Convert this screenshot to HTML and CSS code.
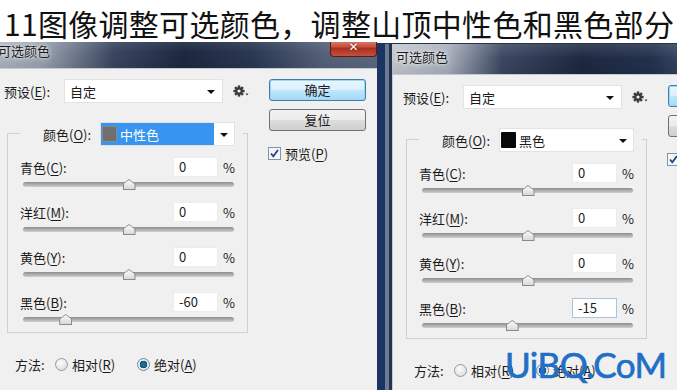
FILE: index.html
```html
<!DOCTYPE html>
<html>
<head>
  <meta charset="utf-8">
  <title>可选颜色</title>
  <link rel="stylesheet" href="styles.css">
</head>
<body>
  <h1 class="headline">11图像调整可选颜色，调整山顶中性色和黑色部分</h1>

  <div class="stage">
      <div class="win win-a">
          <div class="titlebar">
              <span class="title">可选颜色</span>
              <span class="close">✕</span>
          </div>
          <div class="client">
              <div class="main">
                  <div class="preset">
                      <span class="lbl">预设(<u>E</u>):</span>
                      <span class="select preset-select">自定<i class="arrow"></i></span>
                      <svg class="gear" width="16" height="12" viewBox="0 0 16 12">
                          <g fill="#3a3a3a" transform="translate(6 6)">
                              <circle r="3.7"/>
                              <rect x="-1.2" y="-5.6" width="2.4" height="11.2"/>
                              <rect x="-1.2" y="-5.6" width="2.4" height="11.2" transform="rotate(45)"/>
                              <rect x="-1.2" y="-5.6" width="2.4" height="11.2" transform="rotate(90)"/>
                              <rect x="-1.2" y="-5.6" width="2.4" height="11.2" transform="rotate(135)"/>
                          </g>
                          <circle cx="6" cy="6" r="1.6" fill="#f0f0f0"/>
                          <path d="M12.5 8.5h3l-1.5 2z" fill="#3a3a3a"/>
                      </svg>
                  </div>

                  <div class="group">
                      <div class="legend">
                          <span class="lbl">颜色(<u>O</u>):</span>
                          <span class="select color-select picked">
                              <b class="swatch neutral"></b><span class="cname">中性色</span>
                              <span class="drop"><i class="arrow"></i></span>
                          </span>
                      </div>
                      <div class="rows">
                          <div class="row">
                              <div class="field"><span class="lbl">青色(<u>C</u>):</span><span class="num">0</span><span class="pct">%</span></div>
                              <div class="slider"><span class="thumb" style="left: 50%"></span></div>
                          </div>
                          <div class="row">
                              <div class="field"><span class="lbl">洋红(<u>M</u>):</span><span class="num">0</span><span class="pct">%</span></div>
                              <div class="slider"><span class="thumb" style="left: 50%"></span></div>
                          </div>
                          <div class="row">
                              <div class="field"><span class="lbl">黄色(<u>Y</u>):</span><span class="num">0</span><span class="pct">%</span></div>
                              <div class="slider"><span class="thumb" style="left: 50%"></span></div>
                          </div>
                          <div class="row">
                              <div class="field"><span class="lbl">黑色(<u>B</u>):</span><span class="num">-60</span><span class="pct">%</span></div>
                              <div class="slider"><span class="thumb" style="left: 20%"></span></div>
                          </div>
                      </div>
                  </div>

                  <div class="method">
                      <span class="lbl">方法:</span>
                      <span class="opt"><i class="radio"></i><span>相对(<u>R</u>)</span></span>
                      <span class="opt"><i class="radio on"></i><span>绝对(<u>A</u>)</span></span>
                  </div>
              </div>

              <div class="side">
                  <span class="btn default">确定</span>
                  <span class="btn">复位</span>
                  <span class="check">
                      <svg class="box" width="13" height="13" viewBox="0 0 13 13">
                          <rect x="0.5" y="0.5" width="12" height="12" fill="#f4f6f8" stroke="#8593a2"/>
                          <path d="M3 6.5l2.3 2.8L10 3" fill="none" stroke="#23438a" stroke-width="1.8"/>
                      </svg>
                      <span>预览(<u>P</u>)</span>
                  </span>
              </div>
          </div>
      </div>

      <div class="win win-b">
          <div class="titlebar">
              <span class="title">可选颜色</span>
          </div>
          <div class="client">
              <div class="main">
                  <div class="preset">
                      <span class="lbl">预设(<u>E</u>):</span>
                      <span class="select preset-select">自定<i class="arrow"></i></span>
                      <svg class="gear" width="16" height="12" viewBox="0 0 16 12">
                          <g fill="#3a3a3a" transform="translate(6 6)">
                              <circle r="3.7"/>
                              <rect x="-1.2" y="-5.6" width="2.4" height="11.2"/>
                              <rect x="-1.2" y="-5.6" width="2.4" height="11.2" transform="rotate(45)"/>
                              <rect x="-1.2" y="-5.6" width="2.4" height="11.2" transform="rotate(90)"/>
                              <rect x="-1.2" y="-5.6" width="2.4" height="11.2" transform="rotate(135)"/>
                          </g>
                          <circle cx="6" cy="6" r="1.6" fill="#f0f0f0"/>
                          <path d="M12.5 8.5h3l-1.5 2z" fill="#3a3a3a"/>
                      </svg>
                  </div>

                  <div class="group">
                      <div class="legend">
                          <span class="lbl">颜色(<u>O</u>):</span>
                          <span class="select color-select">
                              <b class="swatch black"></b><span class="cname">黑色</span>
                              <span class="drop"><i class="arrow"></i></span>
                          </span>
                      </div>
                      <div class="rows">
                          <div class="row">
                              <div class="field"><span class="lbl">青色(<u>C</u>):</span><span class="num">0</span><span class="pct">%</span></div>
                              <div class="slider"><span class="thumb" style="left: 50%"></span></div>
                          </div>
                          <div class="row">
                              <div class="field"><span class="lbl">洋红(<u>M</u>):</span><span class="num">0</span><span class="pct">%</span></div>
                              <div class="slider"><span class="thumb" style="left: 50%"></span></div>
                          </div>
                          <div class="row">
                              <div class="field"><span class="lbl">黄色(<u>Y</u>):</span><span class="num">0</span><span class="pct">%</span></div>
                              <div class="slider"><span class="thumb" style="left: 50%"></span></div>
                          </div>
                          <div class="row">
                              <div class="field"><span class="lbl">黑色(<u>B</u>):</span><span class="num focus">-15</span><span class="pct">%</span></div>
                              <div class="slider"><span class="thumb" style="left: 42.5%"></span></div>
                          </div>
                      </div>
                  </div>

                  <div class="method">
                      <span class="lbl">方法:</span>
                      <span class="opt"><i class="radio"></i><span>相对(<u>R</u>)</span></span>
                      <span class="opt"><i class="radio on"></i><span>绝对(<u>A</u>)</span></span>
                  </div>
              </div>

              <div class="side">
                  <span class="btn default">确定</span>
                  <span class="btn">复位</span>
                  <span class="check">
                      <svg class="box" width="13" height="13" viewBox="0 0 13 13">
                          <rect x="0.5" y="0.5" width="12" height="12" fill="#f4f6f8" stroke="#8593a2"/>
                          <path d="M3 6.5l2.3 2.8L10 3" fill="none" stroke="#23438a" stroke-width="1.8"/>
                      </svg>
                      <span>预览(<u>P</u>)</span>
                  </span>
              </div>
          </div>
      </div>

      <div class="watermark">UiBQ.CoM</div>
  </div>
</body>
</html>
```

FILE: styles.css
```css
* {
box-sizing: border-box;
}
html, body {
margin: 0;
}
body {
width: 677px;
height: 390px;
overflow: hidden;
background: #fff;
color: #1b1b1b;
font-family: "Noto Sans CJK SC", sans-serif;
font-size: 13px;
}
u {
text-decoration-thickness: 1px;
text-underline-offset: 2px;
}

/* header line */
.headline {
margin: 0;
height: 42px;
padding: 4px 0 0 4px;
font: 400 30px/38px "Noto Sans CJK SC", sans-serif;
letter-spacing: 0.3px;
color: #111;
white-space: nowrap;
}

.stage {
position: relative;
display: flex;
height: 348px;
overflow: hidden;
}

/* windows */
.win {
flex: none;
display: flex;
flex-direction: column;
}
.win-a {
width: 383px;
margin: -5px 0 0 -6px;
}
.win-b {
width: 398px;
margin-top: 1px;
padding-left: 15px;
background: linear-gradient(to right, #1b3560 0 8px, #6c7b91 8px 12px, #24324d 12px 15px);
border-top: 1px solid #2a3447;
}
.titlebar {
flex: none;
height: 31px;
display: flex;
align-items: flex-start;
padding: 6px 0 0 4px;
}
.win-a .titlebar {
background:
  linear-gradient(rgba(255,255,255,.12), rgba(255,255,255,0) 50%, rgba(0,0,0,.08)),
  linear-gradient(to right, #b2b8c3 0, #9aa2b0 50px, #3a4660 120px, #1d2841 190px, #2c3953 260px, #55627a 330px, #5d6a82 383px);
}
.win-b .titlebar {
height: 30px;
padding-top: 5px;
background:
  linear-gradient(rgba(255,255,255,.12), rgba(255,255,255,0) 50%, rgba(0,0,0,.08)),
  linear-gradient(to right, #c3c8d0 0, #aab1bd 55px, #3b4761 110px, #1d2841 190px, #23314d 260px, #3a4b69 300px);
}
.title {
font-size: 13px;
line-height: 16px;
color: #1a1a1a;
text-shadow: 0 0 5px rgba(255,255,255,.9), 0 0 2px rgba(255,255,255,.8);
}
.close {
margin-left: auto;
margin-top: -4px;
width: 47px;
height: 18px;
border: 1px solid #5a1c14;
border-top: 0;
border-radius: 0 0 4px 4px;
background: linear-gradient(#e08f7f, #c7503d 45%, #a8301f 55%, #c4513b);
color: #fff;
font: bold 12px/16px "DejaVu Sans", sans-serif;
text-align: center;
text-shadow: 0 0 2px #5a1c14;
}

.client {
flex: 1;
display: flex;
background: #f0f0f0;
border-top: 1px solid #c3cad4;
}
.win-b .client {
border-left: 1px solid #c3cad4;
}

.main {
flex: none;
width: 275px;
padding: 10px 0 0 10px;
}
.lbl {
flex: none;
white-space: nowrap;
}

/* preset */
.preset {
display: flex;
align-items: center;
height: 24px;
}
.preset .lbl {
width: 60px;
}
.select {
position: relative;
display: flex;
align-items: center;
height: 24px;
background: #fff;
border: 1px solid #e3e3e3;
padding-left: 5px;
}
.preset-select {
width: 159px;
}
.arrow {
position: absolute;
top: 10px;
right: 7px;
width: 0;
height: 0;
border-top: 4px solid #111;
border-left: 4px solid transparent;
border-right: 4px solid transparent;
}
.gear {
margin-left: 10px;
}

/* group box */
.group {
margin: 30px 0 0 3px;
width: 241px;
border: 1px solid #cdd1d6;
padding-bottom: 6px;
}
.legend {
display: flex;
align-items: center;
margin: -12px 0 0 12px;
width: 223px;
padding: 0 8px 0 23px;
background: #f0f0f0;
}
.legend .lbl {
width: 57px;
}
.color-select {
width: 135px;
padding-left: 1px;
}
.color-select.picked {
background: linear-gradient(to right, #3794ef 0 113px, #fff 113px);
color: #fff;
}
.swatch {
width: 15px;
height: 16px;
margin-right: 3px;
border-radius: 1px;
}
.swatch.neutral {
background: #6f6f6f;
border: 1px solid #8a8a8a;
}
.swatch.black {
background: #080808;
}
.drop .arrow {
right: 6px;
}

/* sliders */
.rows {
display: flex;
flex-direction: column;
gap: 11px;
margin-top: 11px;
padding-left: 12px;
}
.row {
height: 34px;
}
.field {
display: flex;
align-items: center;
height: 20px;
}
.field .lbl {
width: 153px;
}
.num {
width: 45px;
height: 20px;
line-height: 18px;
padding-left: 5px;
background: #fff;
border: 1px solid #ececec;
}
.num.focus {
border-color: #a9c4de;
}
.pct {
margin-left: 5px;
}
.slider {
position: relative;
margin: 5px 0 0 3px;
width: 211px;
height: 5px;
border-radius: 3px;
background: linear-gradient(#8d8d8d, #b4b4b4 60%, #d0d0d0);
}
.thumb {
position: absolute;
top: -3px;
width: 13px;
height: 11px;
margin-left: -6px;
background: #8a8a8a;
clip-path: polygon(50% 0, 100% 45%, 100% 100%, 0 100%, 0 45%);
}
.thumb::after {
content: '';
position: absolute;
inset: 1px;
background: linear-gradient(#fafafa, #d9d9d9);
clip-path: polygon(50% 0, 100% 45%, 100% 100%, 0 100%, 0 45%);
}

/* method */
.method {
display: flex;
align-items: center;
height: 20px;
margin-top: 21px;
padding-left: 11px;
}
.method .lbl {
width: 40px;
}
.opt {
display: flex;
align-items: center;
gap: 4px;
width: 82px;
}
.radio {
width: 13px;
height: 13px;
border-radius: 50%;
border: 1px solid #9a9a9a;
background: radial-gradient(circle at 40% 35%, #fdfdfd, #d6d6d6);
}
.radio.on {
border-color: #6a8aa3;
background: radial-gradient(circle, #1b6a97 0 2.5px, #0e3f62 3.5px, #dfe6ec 4px, #f4f6f8);
}

/* buttons column */
.side {
flex: none;
width: 97px;
padding-top: 10px;
display: flex;
flex-direction: column;
gap: 8px;
}
.btn {
display: block;
height: 22px;
line-height: 20px;
text-align: center;
border: 1px solid #707070;
border-radius: 3px;
background: linear-gradient(#f2f2f2, #ebebeb 50%, #dddddd 51%, #cfcfcf);
}
.btn.default {
border-color: #3c7fb1;
box-shadow: inset 0 0 0 1px #9fd5f5;
background: linear-gradient(#eaf6fd, #d9f0fc 50%, #bee6fd 51%, #a7d9f5);
}
.check {
display: flex;
align-items: center;
gap: 4px;
margin-top: 6px;
margin-left: -1px;
height: 16px;
}

.watermark {
position: absolute;
left: 505px;
top: 305px;
font: 400 35px/1 Lato, "Open Sans", sans-serif;
color: #1f6fc6;
letter-spacing: -0.5px;
-webkit-text-stroke: 0.7px #1f6fc6;
}
```
